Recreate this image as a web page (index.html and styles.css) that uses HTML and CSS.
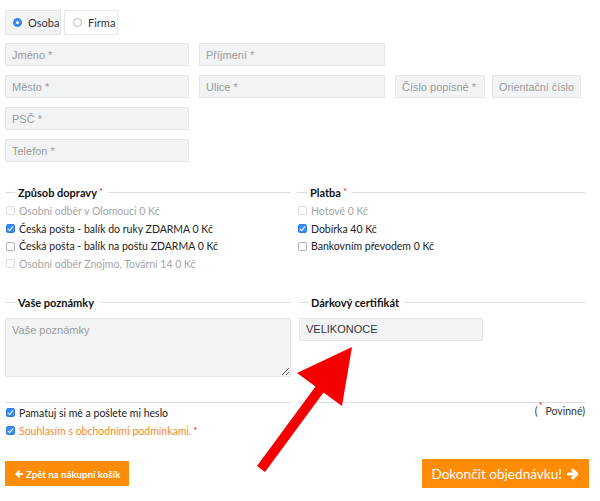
FILE: index.html
```html
<!DOCTYPE html>
<html>
<head>
    <meta charset="UTF-8">
    <title>Objednávka</title>
    <link rel="stylesheet" href="styles.css">
</head>
<body>

<div class="page">
    <!--osoba / firma-->
    <div class="switch">
        <span class="sw sw-on"><i class="radio radio-on"></i>Osoba</span>
        <span class="sw"><i class="radio"></i>Firma</span>
    </div>

    <!--adresa-->
    <div class="row">
        <input class="txt w-a" type="text" placeholder="Jméno *">
        <input class="txt w-b" type="text" placeholder="Příjmení *">
    </div>
    <div class="row">
        <input class="txt w-a" type="text" placeholder="Město *">
        <input class="txt w-b" type="text" placeholder="Ulice *">
        <input class="txt w-c" type="text" placeholder="Číslo popisné *">
        <input class="txt w-d" type="text" placeholder="Orientační číslo">
    </div>
    <div class="row">
        <input class="txt w-a" type="text" placeholder="PSČ *">
    </div>
    <div class="row">
        <input class="txt w-a" type="text" placeholder="Telefon *">
    </div>

    <!--doprava a platba-->
    <div class="cols cols-first">
        <div class="col col-l">
            <div class="legend"><span class="hl hl-s"></span><b>Způsob dopravy</b><sup class="req">*</sup><span class="hl"></span></div>
            <ul class="opts">
                <li class="off"><i class="cb"></i>Osobní odběr v Olomouci 0 Kč</li>
                <li><i class="cb cb-on"></i>Česká pošta - balík do ruky ZDARMA 0 Kč</li>
                <li><i class="cb"></i>Česká pošta - balík na poštu ZDARMA 0 Kč</li>
                <li class="off"><i class="cb"></i>Osobní odběr Znojmo, Tovární 14 0 Kč</li>
            </ul>
        </div>
        <div class="col col-r">
            <div class="legend"><span class="hl hl-s"></span><b>Platba</b><sup class="req">*</sup><span class="hl"></span></div>
            <ul class="opts">
                <li class="off"><i class="cb"></i>Hotově 0 Kč</li>
                <li><i class="cb cb-on"></i>Dobírka 40 Kč</li>
                <li><i class="cb"></i>Bankovním převodem 0 Kč</li>
            </ul>
        </div>
    </div>

    <!--poznamky a certifikat-->
    <div class="cols cols-second">
        <div class="col col-l">
            <div class="legend"><span class="hl hl-s"></span><b>Vaše poznámky</b><span class="hl"></span></div>
            <textarea class="note" placeholder="Vaše poznámky"></textarea>
        </div>
        <div class="col col-r">
            <div class="legend"><span class="hl hl-s"></span><b>Dárkový certifikát</b><span class="hl"></span></div>
            <input class="txt w-cert" type="text" value="VELIKONOCE">
        </div>
    </div>

    <div class="cols cols-end">
        <div class="col col-l">
            <ul class="opts">
                <li><i class="cb cb-on"></i>Pamatuj si mě a pošlete mi heslo</li>
                <li class="agree"><i class="cb cb-on"></i>Souhlasím s obchodními podmínkami.<sup class="req">*</sup></li>
            </ul>
        </div>
        <div class="col col-r">
            <div class="must">(<sup class="req">*</sup>&nbsp;Povinné)</div>
        </div>
    </div>

    <!--tlacitka-->
    <div class="actions">
        <a href="javascript:;" class="btn btn-back">
            <svg width="8" height="8" viewBox="0 0 10 10"><path d="M9 5H2M5.2 1.6L1.8 5l3.4 3.4" fill="none" stroke="#fff" stroke-width="2.4" stroke-linecap="round" stroke-linejoin="round"/></svg>
            Zpět na nákupní košík
        </a>
        <a href="javascript:;" class="btn btn-go">
            Dokončit objednávku!
            <svg width="12" height="12" viewBox="0 0 10 10"><path d="M1 5h7M4.8 1.6L8.2 5 4.8 8.4" fill="none" stroke="#fff" stroke-width="2.4" stroke-linecap="round" stroke-linejoin="round"/></svg>
        </a>
    </div>
</div>

<!--cervena sipka-->
<svg class="pointer" width="600" height="501" viewBox="0 0 600 501">
    <polygon points="352,347 297,373 315.5,386.5 257,466 265,472 323.5,392.5 342,406" fill="#f40000"/>
</svg>

</body>
</html>
```

FILE: styles.css
```css
* {
    padding: 0;
    margin: 0;
    box-sizing: border-box;
}

body {
    background: #fff;
    font: 10.5px "Lato", "Noto Sans", sans-serif;
    color: #333;
}

.page {
    width: 589px;
    padding: 10px 0 0 5px;
}

/* osoba / firma */
.switch {
    display: flex;
    gap: 3px;
    height: 25px;
}

.sw {
    display: flex;
    align-items: center;
    gap: 6px;
    width: 54px;
    padding-left: 8px;
    border: 1px solid #e8e8e8;
    background: #fff;
    font-size: 11px;
}

.sw-on {
    width: 56px;
    padding-left: 7px;
    background: #f2f3f5;
    border-color: #e4e5e7;
}

.radio {
    display: block;
    width: 9px;
    height: 9px;
    border: 1px solid #b5b5b5;
    border-radius: 50%;
    background: #fff;
}

.radio-on {
    border-color: #2f7fe8;
    background: #3a8df3;
    position: relative;
}

.radio-on::after {
    content: "";
    position: absolute;
    left: 2px;
    top: 2px;
    width: 3px;
    height: 3px;
    border-radius: 50%;
    background: #fff;
}

/* inputy */
.row {
    display: flex;
    gap: 10px;
    margin-top: 8px;
}

.row + .row {
    margin-top: 9px;
}

.txt {
    height: 23px;
    border: 1px solid #e5e6e8;
    background: #f2f3f5;
    padding: 0 6px;
    font: 11px "Liberation Sans", Arial, sans-serif;
    color: #333;
    outline: none;
}

.txt::placeholder,
.note::placeholder {
    color: #9b9b9b;
}

.w-a {
    width: 184px;
}

.w-b {
    width: 186px;
}

.w-c {
    width: 90px;
}

.w-d {
    width: 89px;
    margin-left: -3px;
    padding-right: 1px;
    font-size: 10.8px;
}

.w-cert {
    width: 184px;
    margin-left: 1px;
}

/* sloupce */
.cols {
    display: flex;
    gap: 6px;
}

.cols-first {
    margin-top: 22px;
}

.cols-second {
    margin-top: 22px;
}

.cols-second .col {
    border-bottom: 1px solid #dedede;
}

.cols-second .col-r {
    margin-left: 1px;
    width: 287px;
}

.col-l {
    width: 286px;
}

.col-r {
    width: 288px;
}

.legend {
    display: flex;
    align-items: center;
    height: 16px;
    font-size: 11px;
    color: #111;
}

.legend b {
    margin-left: 3px;
}

.hl {
    flex: 1;
    height: 1px;
    background: #dedede;
    margin-left: 5px;
}

.hl-s {
    flex: none;
    width: 10px;
    margin-left: 0;
}

.req {
    color: #f01e1e;
    font-size: 10px;
    line-height: 0;
    position: relative;
    top: -1px;
    margin-left: 2px;
}

.opts {
    list-style: none;
    margin-top: 2px;
}

.opts li {
    display: flex;
    align-items: center;
    height: 17.7px;
    color: #222;
    white-space: nowrap;
}

.opts li.off {
    color: #a5a5a5;
}

.opts li.agree {
    color: #f68b1f;
    height: 19px;
}

.cb {
    display: block;
    flex: none;
    width: 9px;
    height: 9px;
    margin: 0 4px 0 1px;
    border: 1px solid #b0b0b0;
    border-radius: 2px;
    background: #fff;
    position: relative;
}

.off .cb {
    border-color: #dcdcdc;
}

.cb-on {
    background: #3a8df3;
    border-color: #2f7fe8;
}

.cb-on::after {
    content: "";
    position: absolute;
    left: 2px;
    top: 0;
    width: 2px;
    height: 5px;
    border: solid #fff;
    border-width: 0 1.5px 1.5px 0;
    transform: rotate(40deg);
}

.note {
    display: block;
    width: 286px;
    height: 59px;
    margin-top: 7px;
    margin-bottom: 25px;
    border: 1px solid #e5e6e8;
    background: #f2f3f5;
    padding: 5px 6px;
    font: 11px "Liberation Sans", Arial, sans-serif;
    resize: vertical;
    outline: none;
}

.cols-second .col-r .txt {
    margin-top: 7px;
}

.cols-end .opts {
    margin-top: 1px;
}

.must {
    text-align: right;
    margin-top: 2px;
    font-size: 10.5px;
    color: #333;
}

.must .req {
    margin: 0 0 0 1px;
}

/* tlacitka */
.actions {
    display: flex;
    justify-content: space-between;
    align-items: center;
    margin-top: 19px;
    height: 29px;
}

.btn {
    display: flex;
    align-items: center;
    gap: 4px;
    background: #ff8c06;
    color: #fff;
    text-decoration: none;
    white-space: nowrap;
    font-family: "Lato", sans-serif;
}

.btn svg {
    flex: none;
}

.btn-back {
    height: 25px;
    padding: 0 8px 0 10px;
    font-size: 9.7px;
    font-weight: bold;
    gap: 3px;
}

.btn-go {
    height: 29px;
    padding: 0 10px 0 9px;
    gap: 5px;
    font-size: 13.6px;
}

.pointer {
    position: absolute;
    left: 0;
    top: 0;
}
```
